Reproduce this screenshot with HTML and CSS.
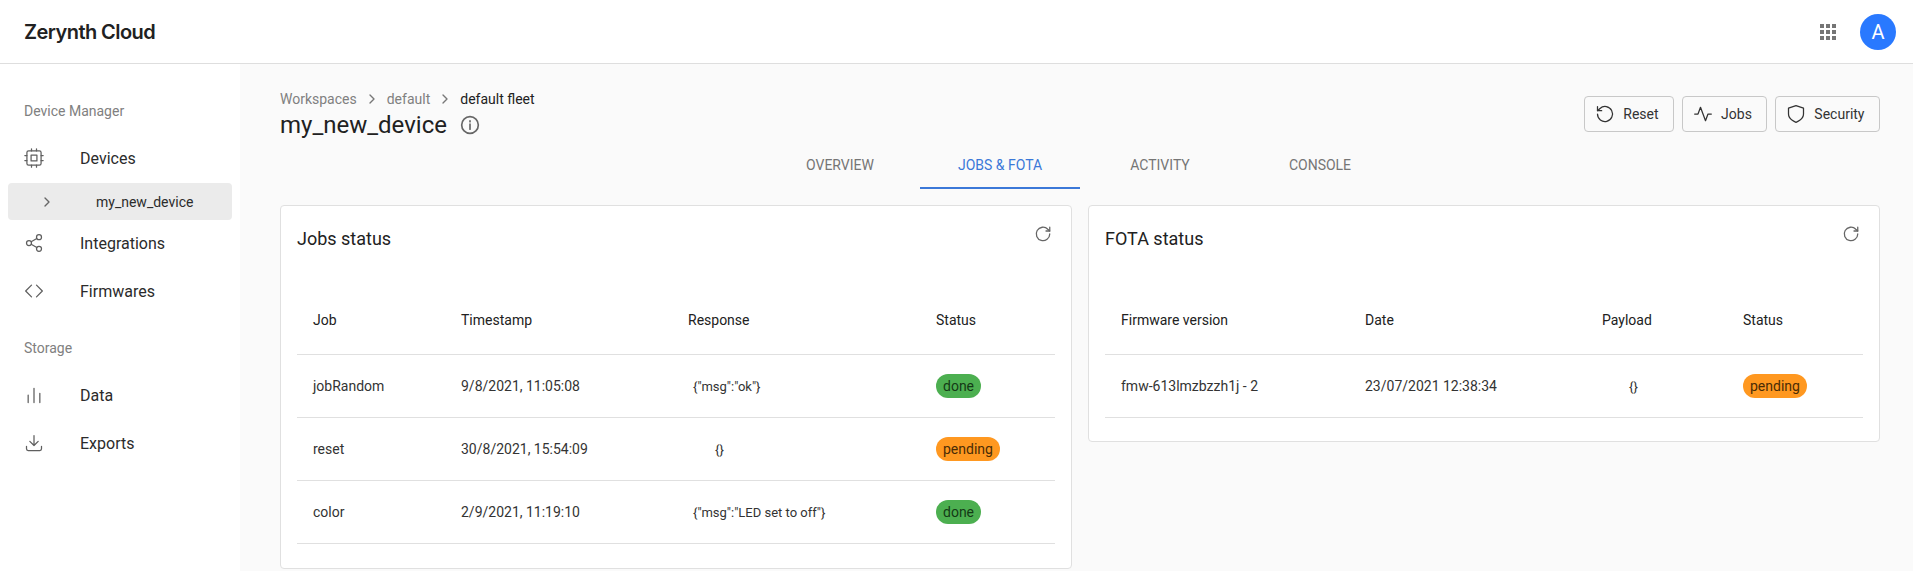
FILE: index.html
```html
<!DOCTYPE html>
<html lang="en">
<head>
    <meta charset="UTF-8">
    <title>Zerynth Cloud</title>
    <link rel="stylesheet" href="styles.css">
</head>
<body>

    <!-- Top bar -->
    <header class="topbar">
        <div class="logo">Zerynth Cloud</div>
        <div class="topbar-right">
            <svg class="apps" viewBox="0 0 16 16" width="16" height="16">
                <rect x="0" y="0" width="4" height="4"/><rect x="6" y="0" width="4" height="4"/><rect x="12" y="0" width="4" height="4"/>
                <rect x="0" y="6" width="4" height="4"/><rect x="6" y="6" width="4" height="4"/><rect x="12" y="6" width="4" height="4"/>
                <rect x="0" y="12" width="4" height="4"/><rect x="6" y="12" width="4" height="4"/><rect x="12" y="12" width="4" height="4"/>
            </svg>
            <div class="avatar">A</div>
        </div>
    </header>

    <div class="layout">
        <!-- Side menu -->
        <aside class="sidebar">
            <div class="side-title">Device Manager</div>
            <a class="side-item">
                <svg class="side-icon" viewBox="0 0 24 24"><rect x="3.5" y="3.5" width="17" height="17" rx="2"/><rect x="8.5" y="8.5" width="7" height="7"/><path d="M9 1v2.5M15 1v2.5M9 20.5V23M15 20.5V23M1 9h2.5M1 15h2.5M20.5 9H23M20.5 15H23"/></svg>
                Devices
            </a>
            <a class="side-sub">
                <svg class="side-chevron" viewBox="0 0 24 24"><path d="M9 6l6 6-6 6"/></svg>
                my_new_device
            </a>
            <a class="side-item">
                <svg class="side-icon" viewBox="0 0 24 24"><circle cx="18" cy="5" r="3"/><circle cx="6" cy="12" r="3"/><circle cx="18" cy="19" r="3"/><path d="M8.6 13.5l6.8 4M15.4 6.5l-6.8 4"/></svg>
                Integrations
            </a>
            <a class="side-item">
                <svg class="side-icon" viewBox="0 0 24 24"><path d="M9 5l-7 7 7 7M15 5l7 7-7 7"/></svg>
                Firmwares
            </a>
            <div class="side-title storage">Storage</div>
            <a class="side-item">
                <svg class="side-icon" viewBox="0 0 24 24"><path d="M5 21v-9M12 21V4M19 21V10"/></svg>
                Data
            </a>
            <a class="side-item">
                <svg class="side-icon" viewBox="0 0 24 24"><path d="M3 16v3a2 2 0 0 0 2 2h14a2 2 0 0 0 2-2v-3M7 10l5 5 5-5M12 15V3"/></svg>
                Exports
            </a>
        </aside>

        <main class="content">
            <div class="page-head">
                <div>
                    <div class="crumbs">
                        <span>Workspaces</span>
                        <svg class="crumb-sep" viewBox="0 0 24 24"><path d="M9 6l6 6-6 6"/></svg>
                        <span>default</span>
                        <svg class="crumb-sep" viewBox="0 0 24 24"><path d="M9 6l6 6-6 6"/></svg>
                        <span class="current">default fleet</span>
                    </div>
                    <h1>my_new_device
                        <svg class="info" viewBox="0 0 24 24"><circle cx="12" cy="12" r="10"/><path d="M12 11v6M12 7v1"/></svg>
                    </h1>
                </div>
                <div class="actions">
                    <button>
                        <svg viewBox="0 0 24 24"><path d="M3 12a9 9 0 1 0 3-6.7L3 8"/><path d="M3 3v5h5"/></svg>
                        Reset
                    </button>
                    <button>
                        <svg viewBox="0 0 24 24"><path d="M22 12h-4l-3 8L9 4l-3 8H2"/></svg>
                        Jobs
                    </button>
                    <button>
                        <svg viewBox="0 0 24 24"><path d="M12 22s9-3 9-10V5l-9-3-9 3v7c0 7 9 10 9 10z"/></svg>
                        Security
                    </button>
                </div>
            </div>

            <nav class="tabs">
                <a class="tab">OVERVIEW</a>
                <a class="tab active">JOBS &amp; FOTA</a>
                <a class="tab">ACTIVITY</a>
                <a class="tab">CONSOLE</a>
            </nav>

            <div class="cards">
                <section class="card jobs">
                    <div class="card-head">
                        <h2>Jobs status</h2>
                        <svg class="refresh" viewBox="0 0 24 24"><path d="M21 12a9 9 0 1 1-2.6-6.4L21 8"/><path d="M21 3v5h-5"/></svg>
                    </div>
                    <table>
                        <thead>
                            <tr><th class="c1">Job</th><th class="c2">Timestamp</th><th class="c3">Response</th><th>Status</th></tr>
                        </thead>
                        <tbody>
                            <tr><td>jobRandom</td><td>9/8/2021, 11:05:08</td><td><span class="resp">{"msg":"ok"}</span></td><td><span class="badge done">done</span></td></tr>
                            <tr><td>reset</td><td>30/8/2021, 15:54:09</td><td><span class="empty">{}</span></td><td><span class="badge pending">pending</span></td></tr>
                            <tr><td>color</td><td>2/9/2021, 11:19:10</td><td><span class="resp">{"msg":"LED set to off"}</span></td><td><span class="badge done">done</span></td></tr>
                        </tbody>
                    </table>
                </section>

                <section class="card fota">
                    <div class="card-head">
                        <h2>FOTA status</h2>
                        <svg class="refresh" viewBox="0 0 24 24"><path d="M21 12a9 9 0 1 1-2.6-6.4L21 8"/><path d="M21 3v5h-5"/></svg>
                    </div>
                    <table>
                        <thead>
                            <tr><th class="f1">Firmware version</th><th class="f2">Date</th><th class="f3">Payload</th><th>Status</th></tr>
                        </thead>
                        <tbody>
                            <tr><td>fmw-613lmzbzzh1j - 2</td><td>23/07/2021 12:38:34</td><td><span class="empty">{}</span></td><td><span class="badge pending">pending</span></td></tr>
                        </tbody>
                    </table>
                </section>
            </div>
        </main>
    </div>

</body>
</html>
```

FILE: styles.css
```css
* {
    box-sizing: border-box;
}
html, body {
    height: 100%;
}
body {
    margin: 0;
    font-family: Roboto, sans-serif;
    color: #212121;
    background: #fafafa;
    overflow: hidden;
}
svg {
    fill: none;
    stroke-linecap: round;
    stroke-linejoin: round;
    flex-shrink: 0;
}
.topbar {
    height: 64px;
    background: white;
    border-bottom: 1px solid #dedede;
    display: flex;
    align-items: center;
    justify-content: space-between;
    padding: 0 17px 0 24px;
}
.logo {
    font-family: Inter, sans-serif;
    font-size: 20px;
    font-weight: 600;
    letter-spacing: -0.55px;
}
.topbar-right {
    display: flex;
    align-items: center;
    gap: 24px;
}
.apps {
    fill: #757575;
}
.avatar {
    width: 36px;
    height: 36px;
    border-radius: 50%;
    background: #2979ff;
    color: white;
    font-size: 20px;
    display: flex;
    align-items: center;
    justify-content: center;
}
.layout {
    display: flex;
    height: 507px;
}
.sidebar {
    width: 240px;
    background: white;
    padding: 36px 8px 0;
    flex-shrink: 0;
}
.side-title {
    font-size: 14px;
    color: #808080;
    padding-left: 16px;
    height: 22px;
    line-height: 22px;
    margin-bottom: 12px;
}
.side-title.storage {
    margin-top: 22px;
}
.side-item {
    display: flex;
    align-items: center;
    height: 48px;
    padding-left: 16px;
    font-size: 16px;
    color: #2b2b2b;
}
.side-icon {
    width: 20px;
    height: 20px;
    stroke: #5f5f5f;
    stroke-width: 1.5;
    margin-right: 36px;
}
.side-sub {
    display: flex;
    align-items: center;
    height: 37px;
    margin: 1px 0 -1px;
    background: #ebebeb;
    border-radius: 4px;
    font-size: 14px;
    color: #2b2b2b;
    padding-left: 31px;
}
.side-chevron {
    width: 16px;
    height: 16px;
    stroke: #666;
    stroke-width: 2;
    margin-right: 41px;
}
.content {
    flex: 1;
    padding: 25px 33px 0 40px;
    min-width: 0;
}
.page-head {
    display: flex;
    justify-content: space-between;
    align-items: flex-start;
}
.crumbs {
    display: flex;
    align-items: center;
    font-size: 14px;
    color: #808080;
    height: 20px;
}
.crumb-sep {
    width: 16px;
    height: 16px;
    stroke: #777;
    stroke-width: 2;
    margin: 0 7px;
}
.crumbs .current {
    color: #212121;
}
h1 {
    margin: 0;
    font-size: 24px;
    font-weight: 400;
    line-height: 32px;
    display: flex;
    align-items: center;
    gap: 13px;
}
.info {
    width: 20px;
    height: 20px;
    stroke: #666;
    stroke-width: 2;
}
.actions {
    display: flex;
    gap: 8px;
    padding-top: 7px;
}
.actions button {
    height: 36px;
    padding: 0 14.5px 0 10px;
    background: #fafafa;
    border: 1px solid #c8c8c8;
    border-radius: 4px;
    font-family: Roboto, sans-serif;
    font-size: 14px;
    color: #333;
    display: flex;
    align-items: center;
    gap: 8px;
}
.actions svg {
    width: 20px;
    height: 20px;
    stroke: #333;
    stroke-width: 1.5;
}
.tabs {
    display: flex;
    justify-content: center;
    height: 48px;
}
.tab {
    width: 160px;
    font-size: 14px;
    color: #757575;
    text-align: center;
    line-height: 48px;
    border-bottom: 2px solid transparent;
}
.tab.active {
    color: #3b78d8;
    border-bottom-color: #3b78d8;
}
.cards {
    display: flex;
    gap: 16px;
    margin-top: 16px;
    align-items: flex-start;
}
.card {
    width: 792px;
    background: white;
    border: 1px solid #e0e0e0;
    border-radius: 4px;
    padding: 0 16px;
}
.card.jobs {
    height: 364px;
}
.card.fota {
    height: 237px;
}
.card-head {
    display: flex;
    justify-content: space-between;
    height: 80px;
    padding-top: 21px;
}
h2 {
    margin: 0;
    font-size: 18px;
    font-weight: 400;
    line-height: 24px;
}
.refresh {
    width: 18px;
    height: 18px;
    stroke: #666;
    stroke-width: 1.7;
    margin-top: -2px;
    margin-right: 3px;
}
table {
    width: 100%;
    border-collapse: collapse;
    table-layout: fixed;
    font-size: 14px;
}
th {
    font-weight: 400;
    text-align: left;
    height: 68px;
    padding: 0 16px;
    border-bottom: 1px solid #e0e0e0;
}
td {
    height: 63px;
    padding: 0 16px;
    border-bottom: 1px solid #e0e0e0;
    color: #333;
}
.c1 {
    width: 148px;
}
.c2 {
    width: 227px;
}
.c3 {
    width: 248px;
}
.resp {
    padding-left: 5px;
    font-size: 13px;
}
.empty {
    padding-left: 27px;
    font-size: 13px;
}
.f1 {
    width: 244px;
}
.f2 {
    width: 237px;
}
.f3 {
    width: 141px;
}
.badge {
    display: inline-block;
    height: 24px;
    line-height: 24px;
    padding: 0 7px;
    border-radius: 12px;
    font-size: 14px;
}
.badge.done {
    background: #4caf50;
    color: #143a16;
}
.badge.pending {
    background: #ff9820;
    color: #4a2c06;
}
```
